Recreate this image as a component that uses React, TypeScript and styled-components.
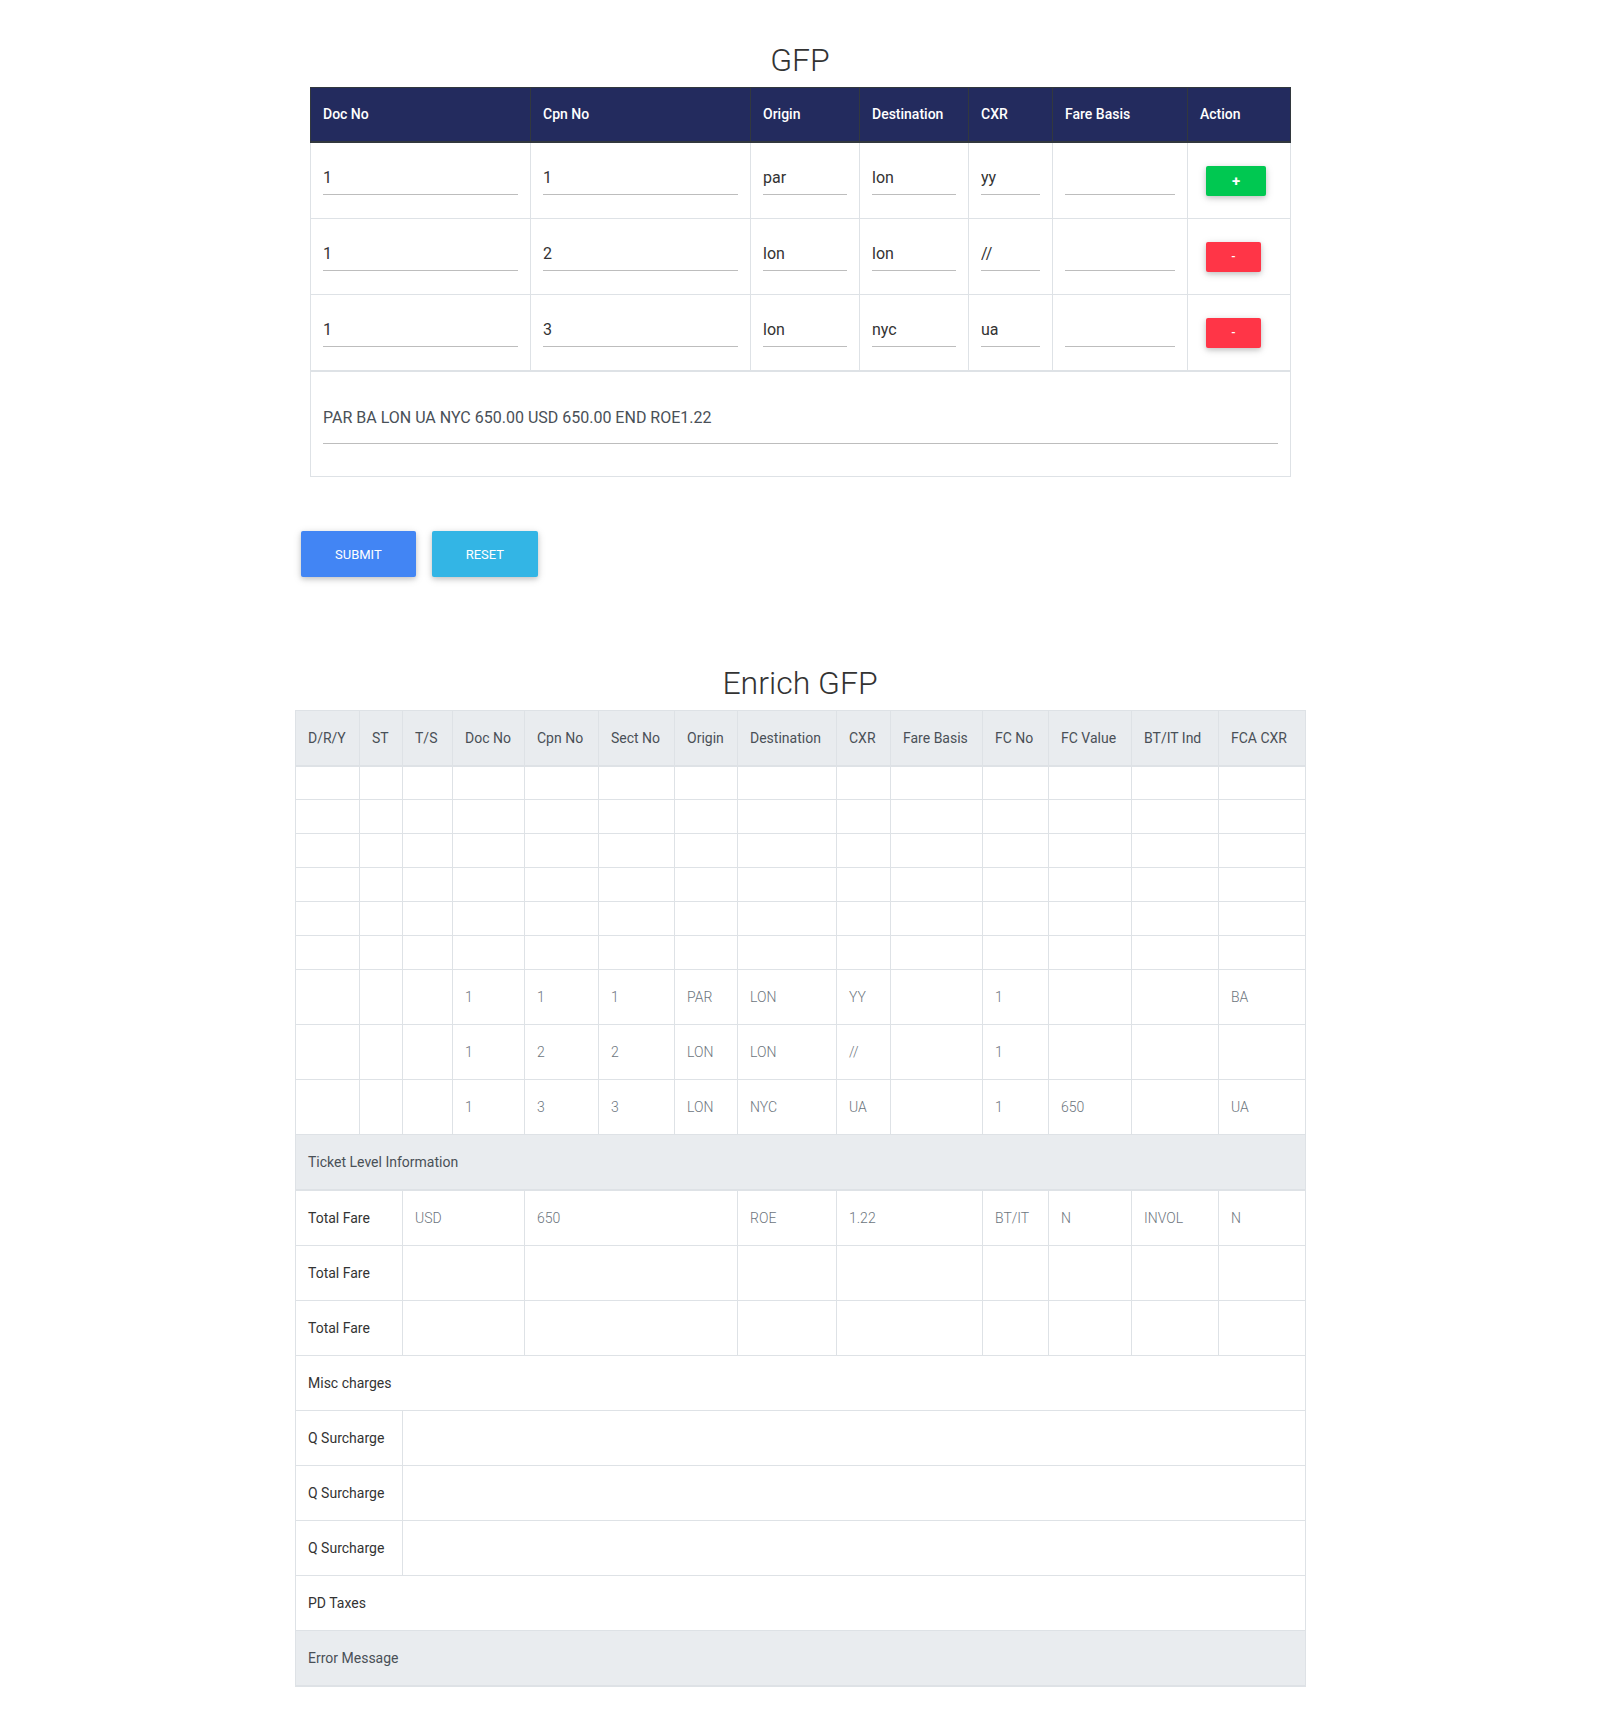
import React from 'react';
import styled, { createGlobalStyle } from 'styled-components';

interface GfpRow {
  doc: string;
  cpn: string;
  origin: string;
  destination: string;
  cxr: string;
  fareBasis: string;
  canAdd: boolean;
}

const gfpRows: GfpRow[] = [
  { doc: '1', cpn: '1', origin: 'par', destination: 'lon', cxr: 'yy', fareBasis: '', canAdd: true },
  { doc: '1', cpn: '2', origin: 'lon', destination: 'lon', cxr: '//', fareBasis: '', canAdd: false },
  { doc: '1', cpn: '3', origin: 'lon', destination: 'nyc', cxr: 'ua', fareBasis: '', canAdd: false },
];

const gfpColumns = [
  { title: 'Doc No', width: 220 },
  { title: 'Cpn No', width: 220 },
  { title: 'Origin', width: 109 },
  { title: 'Destination', width: 109 },
  { title: 'CXR', width: 84 },
  { title: 'Fare Basis', width: 135 },
  { title: 'Action', width: 103 },
];

const enrichColumns = [
  { title: 'D/R/Y', width: 64 },
  { title: 'ST', width: 43 },
  { title: 'T/S', width: 50 },
  { title: 'Doc No', width: 72 },
  { title: 'Cpn No', width: 74 },
  { title: 'Sect No', width: 76 },
  { title: 'Origin', width: 63 },
  { title: 'Destination', width: 99 },
  { title: 'CXR', width: 54 },
  { title: 'Fare Basis', width: 92 },
  { title: 'FC No', width: 66 },
  { title: 'FC Value', width: 83 },
  { title: 'BT/IT Ind', width: 87 },
  { title: 'FCA CXR', width: 87 },
];

const enrichRows: string[][] = [
  ['', '', '', '1', '1', '1', 'PAR', 'LON', 'YY', '', '1', '', '', 'BA'],
  ['', '', '', '1', '2', '2', 'LON', 'LON', '//', '', '1', '', '', ''],
  ['', '', '', '1', '3', '3', 'LON', 'NYC', 'UA', '', '1', '650', '', 'UA'],
];

const GlobalStyle = createGlobalStyle`
  body {
    margin: 0;
    background: #fff;
    font-family: Roboto, 'Liberation Sans', sans-serif;
    color: #212529;
  }
`;

const Page = styled.div`
  width: 1010px;
  margin: 0 auto;
  padding: 41px 0 40px;
`;

const Title = styled.h2`
  margin: 0 0 8px;
  font-size: 32px;
  font-weight: 300;
  line-height: 1.2;
  text-align: center;
  color: #333;
`;

const TableFrame = styled.div`
  margin: 0 15px;
`;

const GfpTable = styled.table`
  width: 100%;
  table-layout: fixed;
  border-collapse: collapse;
  border: 1px solid #dee2e6;
`;

const GfpHead = styled.th`
  padding: 16px 12px;
  background: #232b5e;
  color: #fff;
  font-size: 14px;
  font-weight: 500;
  line-height: 21px;
  text-align: left;
  border: 1px solid #32383e;
  border-bottom: 2px solid #32383e;
`;

const GfpCell = styled.td`
  padding: 12px;
  border: 1px solid #dee2e6;
  vertical-align: middle;
`;

const SummaryCell = styled.td`
  padding: 12px;
  border: 1px solid #dee2e6;
  border-top: 2px solid #dee2e6;
`;

const FieldWrap = styled.div<{ $space: number }>`
  margin: ${p => (p.$space > 11 ? p.$space : 0)}px 0 ${p => p.$space}px;
`;

const LineInput = styled.input<{ $muted?: boolean }>`
  display: block;
  box-sizing: border-box;
  width: 100%;
  height: 40px;
  padding: ${p => (p.$muted ? '0 0 13px' : '5px 0 0')};
  border: 0;
  border-bottom: 1px solid #bdbdbd;
  background: transparent;
  font-family: Roboto, 'Liberation Sans', sans-serif;
  font-size: 16px;
  color: ${p => (p.$muted ? '#495057' : '#333')};
  outline: none;
`;

const ActionButton = styled.button<{ $tone: 'add' | 'remove' }>`
  display: block;
  width: ${p => (p.$tone === 'add' ? 60 : 55)}px;
  height: 30px;
  margin: 0 6px;
  padding: 0;
  border: 0;
  border-radius: 2px;
  background: ${p => (p.$tone === 'add' ? '#00c851' : '#ff3547')};
  color: #fff;
  font-family: Roboto, 'Liberation Sans', sans-serif;
  font-size: ${p => (p.$tone === 'add' ? 15 : 11)}px;
  font-weight: 700;
  box-shadow: 0 2px 5px 0 rgba(0, 0, 0, 0.16), 0 2px 10px 0 rgba(0, 0, 0, 0.12);
`;

const FormActions = styled.div`
  display: flex;
  gap: 16px;
  padding-left: 6px;
  margin-top: 54px;
`;

const FormButton = styled.button<{ $tone: 'primary' | 'info' }>`
  height: 46px;
  padding: 0 34px;
  border: 0;
  border-radius: 2px;
  background: ${p => (p.$tone === 'primary' ? '#4285f4' : '#33b5e5')};
  color: #fff;
  font-family: Roboto, 'Liberation Sans', sans-serif;
  font-size: 13px;
  text-transform: uppercase;
  box-shadow: 0 2px 5px 0 rgba(0, 0, 0, 0.16), 0 2px 10px 0 rgba(0, 0, 0, 0.12);
`;

const EnrichSection = styled.section`
  margin-top: 87px;
`;

const EnrichTitle = styled(Title)`
  margin-bottom: 7px;
`;

const EnrichTable = styled.table`
  width: 100%;
  table-layout: fixed;
  border-collapse: collapse;
  border: 1px solid #dee2e6;
`;

const EnrichHead = styled.th`
  padding: 17px 12px 16px;
  background: #e9ecef;
  color: #495057;
  font-size: 14px;
  font-weight: 400;
  line-height: 21px;
  text-align: left;
  white-space: nowrap;
  border: 1px solid #dee2e6;
  border-bottom: 2px solid #dee2e6;
`;

const BlankCell = styled.td`
  height: 34px;
  padding: 0 12px;
  box-sizing: border-box;
  border: 1px solid #dee2e6;
`;

const ValueCell = styled.td<{ $label?: boolean }>`
  padding: 16px 12px;
  border: 1px solid #dee2e6;
  font-size: 14px;
  line-height: 22px;
  font-weight: ${p => (p.$label ? 400 : 300)};
  color: ${p => (p.$label ? '#333' : '#6c757d')};
  white-space: nowrap;
`;

const BandCell = styled.td`
  padding: 16px 12px;
  background: #e9ecef;
  border: 1px solid #dee2e6;
  border-bottom: 2px solid #dee2e6;
  font-size: 14px;
  line-height: 22px;
  color: #495057;
`;

const Gfp: React.FC = () => (
  <>
    <Title>GFP</Title>
    <TableFrame>
      <GfpTable>
        <colgroup>
          {gfpColumns.map(col => (
            <col key={col.title} style={{ width: col.width }} />
          ))}
        </colgroup>
        <thead>
          <tr>
            {gfpColumns.map(col => (
              <GfpHead key={col.title}>{col.title}</GfpHead>
            ))}
          </tr>
        </thead>
        <tbody>
          {gfpRows.map(row => (
            <tr key={row.cpn}>
              {[row.doc, row.cpn, row.origin, row.destination, row.cxr, row.fareBasis].map((value, i) => (
                <GfpCell key={i}>
                  <FieldWrap $space={11}>
                    <LineInput type="text" defaultValue={value} />
                  </FieldWrap>
                </GfpCell>
              ))}
              <GfpCell>
                <ActionButton $tone={row.canAdd ? 'add' : 'remove'}>{row.canAdd ? '+' : '-'}</ActionButton>
              </GfpCell>
            </tr>
          ))}
          <tr>
            <SummaryCell colSpan={7}>
              <FieldWrap $space={20}>
                <LineInput $muted type="text" defaultValue="PAR BA LON UA NYC 650.00 USD 650.00 END ROE1.22" />
              </FieldWrap>
            </SummaryCell>
          </tr>
        </tbody>
      </GfpTable>
    </TableFrame>
    <FormActions>
      <FormButton $tone="primary">Submit</FormButton>
      <FormButton $tone="info">Reset</FormButton>
    </FormActions>
  </>
);

const Enrich: React.FC = () => (
  <EnrichSection>
    <EnrichTitle>Enrich GFP</EnrichTitle>
    <EnrichTable>
      <colgroup>
        {enrichColumns.map(col => (
          <col key={col.title} style={{ width: col.width }} />
        ))}
      </colgroup>
      <thead>
        <tr>
          {enrichColumns.map(col => (
            <EnrichHead key={col.title}>{col.title}</EnrichHead>
          ))}
        </tr>
      </thead>
      <tbody>
        {[0, 1, 2, 3, 4, 5].map(r => (
          <tr key={`blank-${r}`}>
            {enrichColumns.map(col => (
              <BlankCell key={col.title} />
            ))}
          </tr>
        ))}
        {enrichRows.map((row, r) => (
          <tr key={`seg-${r}`}>
            {row.map((value, i) => (
              <ValueCell key={i}>{value}</ValueCell>
            ))}
          </tr>
        ))}
        <tr>
          <BandCell colSpan={14}>Ticket Level Information</BandCell>
        </tr>
        <tr>
          <ValueCell $label colSpan={2}>Total Fare</ValueCell>
          <ValueCell colSpan={2}>USD</ValueCell>
          <ValueCell colSpan={3}>650</ValueCell>
          <ValueCell>ROE</ValueCell>
          <ValueCell colSpan={2}>1.22</ValueCell>
          <ValueCell>BT/IT</ValueCell>
          <ValueCell>N</ValueCell>
          <ValueCell>INVOL</ValueCell>
          <ValueCell>N</ValueCell>
        </tr>
        {[0, 1].map(r => (
          <tr key={`fare-${r}`}>
            <ValueCell $label colSpan={2}>Total Fare</ValueCell>
            <ValueCell colSpan={2} />
            <ValueCell colSpan={3} />
            <ValueCell />
            <ValueCell colSpan={2} />
            <ValueCell />
            <ValueCell />
            <ValueCell />
            <ValueCell />
          </tr>
        ))}
        <tr>
          <ValueCell $label colSpan={14}>Misc charges</ValueCell>
        </tr>
        {[0, 1, 2].map(r => (
          <tr key={`q-${r}`}>
            <ValueCell $label colSpan={2}>Q Surcharge</ValueCell>
            <ValueCell colSpan={12} />
          </tr>
        ))}
        <tr>
          <ValueCell $label colSpan={14}>PD Taxes</ValueCell>
        </tr>
        <tr>
          <BandCell colSpan={14}>Error Message</BandCell>
        </tr>
      </tbody>
    </EnrichTable>
  </EnrichSection>
);

const App: React.FC = () => (
  <Page>
    <GlobalStyle />
    <Gfp />
    <Enrich />
  </Page>
);

export default App;
